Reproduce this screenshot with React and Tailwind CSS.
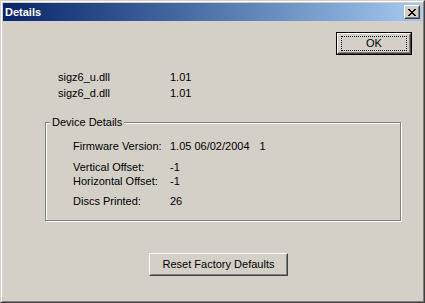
function Btn({ children, className = "", def = false }) {
  const inner = (
    <div className="h-full w-full border border-t-white border-l-white border-r-[#404040] border-b-[#404040]">
      <div className="h-full w-full border border-t-[#d4d0c8] border-l-[#d4d0c8] border-r-[#808080] border-b-[#808080] flex items-center justify-center">
        {def ? (
          <div className="flex h-[15px] w-[66px] items-center justify-center border border-dotted border-black">
            {children}
          </div>
        ) : (
          children
        )}
      </div>
    </div>
  );
  return (
    <div className={className}>
      {def ? <div className="h-full w-full border border-black">{inner}</div> : inner}
    </div>
  );
}

function CloseGlyph() {
  const rows = [
    "XX....XX",
    ".XX..XX.",
    "..XXXX..",
    "...XX...",
    "..XXXX..",
    ".XX..XX.",
    "XX....XX",
  ];
  const rects = [];
  rows.forEach((r, y) =>
    r.split("").forEach((c, x) => {
      if (c === "X") rects.push(<rect key={`${x}-${y}`} x={x} y={y} width="1" height="1" fill="#000" />);
    })
  );
  return (
    <svg width="8" height="7" viewBox="0 0 8 7" shapeRendering="crispEdges">
      {rects}
    </svg>
  );
}

export default function App() {
  return (
    <div
      className="h-[303px] w-[425px] border border-t-[#d4d0c8] border-l-[#d4d0c8] border-r-[#404040] border-b-[#404040] bg-[#d4d0c8] text-[11px] leading-[13px] text-black"
      style={{ fontFamily: '"Liberation Sans", Arial, sans-serif' }}
    >
      <div className="flex h-full flex-col border border-t-white border-l-white border-r-[#808080] border-b-[#808080] p-px">
        <div className="flex h-[18px] items-center justify-between bg-linear-to-r from-[#0a246a] to-[#a6caf0] pl-[2px] pr-[2px]">
          <span className="font-bold text-white">Details</span>
          <div className="h-[14px] w-[16px] border border-t-white border-l-white border-r-[#404040] border-b-[#404040]">
            <div className="flex h-full w-full items-center justify-center border border-t-[#d4d0c8] border-l-[#d4d0c8] border-r-[#808080] border-b-[#808080] bg-[#d4d0c8]">
              <CloseGlyph />
            </div>
          </div>
        </div>

        <div className="mt-px flex flex-1 flex-col">
          <Btn def className="mr-[10px] mt-[10px] h-[23px] w-[76px] self-end">
            OK
          </Btn>

          <div className="ml-[55px] mt-[16px] grid grid-cols-[112px_auto] gap-y-[3px]">
            <span>sigz6_u.dll</span>
            <span>1.01</span>
            <span>sigz6_d.dll</span>
            <span>1.01</span>
          </div>

          <div className="relative ml-[42px] mt-[22px] h-[99px] w-[356px] border border-[#808080] shadow-[inset_1px_1px_0_#fff,1px_1px_0_#fff]">
            <span className="absolute left-[4px] top-[-7px] bg-[#d4d0c8] px-[2px]">Device Details</span>
            <div className="ml-[27px] mt-[17px] grid grid-cols-[97px_auto]">
              <span>Firmware Version:</span>
              <span>
                1.05 06/02/2004<span className="ml-[10px]">1</span>
              </span>
              <span className="mt-[8px]">Vertical Offset:</span>
              <span className="mt-[8px]">-1</span>
              <span className="mt-[1px]">Horizontal Offset:</span>
              <span className="mt-[1px]">-1</span>
              <span className="mt-[7px]">Discs Printed:</span>
              <span className="mt-[7px]">26</span>
            </div>
          </div>

          <Btn className="ml-[146px] mt-[32px] h-[23px] w-[139px]">Reset Factory Defaults</Btn>
        </div>
      </div>
    </div>
  );
}
